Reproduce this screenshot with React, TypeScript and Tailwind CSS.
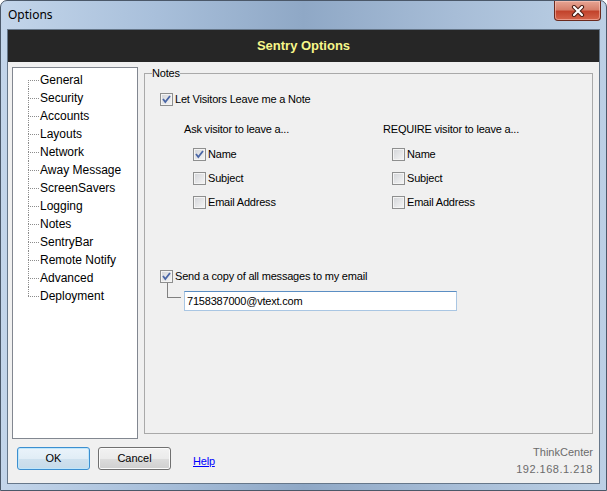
import React from 'react';

const treeItems = [
  'General',
  'Security',
  'Accounts',
  'Layouts',
  'Network',
  'Away Message',
  'ScreenSavers',
  'Logging',
  'Notes',
  'SentryBar',
  'Remote Notify',
  'Advanced',
  'Deployment',
];

const Check: React.FC<{ checked?: boolean }> = ({ checked }) => (
  <span className="flex h-[13px] w-[13px] shrink-0 items-center justify-center border border-[#8e8f8f] bg-[linear-gradient(135deg,#d2d4d8,#f6f6f6)] shadow-[inset_0_0_0_1px_#f4f4f4]">
    {checked && (
      <svg width="11" height="11" viewBox="0 0 11 11">
        <path d="M2 5 L4.3 8 L9 2" fill="none" stroke="#4a66a6" strokeWidth="1.8" />
      </svg>
    )}
  </span>
);

const CheckRow: React.FC<{ checked?: boolean; label: string; className?: string }> = ({
  checked,
  label,
  className = '',
}) => (
  <div className={`flex h-[13px] items-center gap-[2px] ${className}`}>
    <Check checked={checked} />
    <span className="whitespace-nowrap leading-[13px]">{label}</span>
  </div>
);

const App: React.FC = () => {
  return (
    <div className="flex h-[491px] w-[607px] flex-col overflow-hidden rounded-t-[7px] border border-[#4b5869] bg-[linear-gradient(90deg,#c3d5ea_0%,#a9c0db_25%,#8fa8c6_50%,#a7bdd7_75%,#bcd0e5_100%)] font-['Liberation_Sans',Arial,sans-serif] text-[11px] tracking-[-0.2px] text-black">
      {/* title bar */}
      <div className="flex h-[28px] shrink-0 items-start justify-between">
        <span className="ml-[7px] mt-[6px] font-['Noto_Sans',sans-serif] text-[12px] leading-[16px] tracking-normal text-black">
          Options
        </span>
        <div className="mr-[5px] flex h-[20px] w-[47px] items-center justify-center rounded-b-[4px] border border-t-0 border-[#6b2a1e] bg-[linear-gradient(#e6a594,#d6806c_45%,#c2432c_55%,#d5654c)] shadow-[inset_0_0_0_1px_rgba(255,210,200,0.5)]">
          <svg width="14" height="12" viewBox="0 0 14 12">
            <path d="M3 2 L11 10 M11 2 L3 10" stroke="#4a1d14" strokeWidth="4.2" strokeLinecap="round" />
            <path d="M3 2 L11 10 M11 2 L3 10" stroke="#ffffff" strokeWidth="2.2" strokeLinecap="round" />
          </svg>
        </div>
      </div>

      {/* client area */}
      <div className="mx-[6px] mb-[6px] flex flex-1 flex-col border border-[#66778a] bg-[#f0f0f0]">
        <div className="flex h-[32px] shrink-0 items-center justify-center bg-[#262626] text-[13px] font-bold tracking-normal text-[#f7f78a]">
          Sentry Options
        </div>

        <div className="flex gap-[6px] pl-[4px] pr-[6px] pt-[5px]">
          {/* tree */}
          <div className="h-[372px] w-[126px] shrink-0 border border-[#828790] bg-white pt-[3px] text-[12px] tracking-normal">
            {treeItems.map((item, i) => {
              const first = i === 0;
              const last = i === treeItems.length - 1;
              return (
                <div key={item} className="flex h-[18px] items-stretch">
                  <div className="ml-[15px] flex w-[11px] flex-col">
                    <div className={`h-[9px] ${first ? '' : 'border-l border-dotted border-[#8c8c8c]'}`} />
                    <div
                      className={`h-[9px] border-t border-dotted border-[#8c8c8c] ${last ? '' : 'border-l'}`}
                    />
                  </div>
                  <span className="ml-[1px] whitespace-nowrap leading-[18px]">{item}</span>
                </div>
              );
            })}
          </div>

          {/* notes group */}
          <fieldset className="h-[367px] w-[449px] min-w-0 border border-[#a9a9a9]">
            <legend className="ml-[7px] leading-[13px]">Notes</legend>
            <div className="pl-[15px]">
              <CheckRow checked label="Let Visitors Leave me a Note" className="mt-[13px]" />

              <div className="mt-[17px] flex">
                <div className="ml-[24px] w-[199px]">
                  <div className="leading-[13px]">Ask visitor to leave a...</div>
                  <div className="ml-[9px]">
                    <CheckRow checked label="Name" className="mt-[12px]" />
                    <CheckRow label="Subject" className="mt-[11px]" />
                    <CheckRow label="Email Address" className="mt-[11px]" />
                  </div>
                </div>
                <div>
                  <div className="leading-[13px]">REQUIRE visitor to leave a...</div>
                  <div className="ml-[9px]">
                    <CheckRow label="Name" className="mt-[12px]" />
                    <CheckRow label="Subject" className="mt-[11px]" />
                    <CheckRow label="Email Address" className="mt-[11px]" />
                  </div>
                </div>
              </div>

              <CheckRow checked label="Send a copy of all messages to my email" className="mt-[61px]" />
              <div className="flex items-start">
                <div className="ml-[7px] h-[15px] w-[14px] border-b border-l border-[#808080]" />
                <input
                  readOnly
                  defaultValue="7158387000@vtext.com"
                  className="ml-[3px] mt-[8px] h-[20px] w-[273px] border border-[#a9c6e3] border-t-[#5b8ec3] bg-white pl-[2px] text-[11px] tracking-[-0.2px] text-black outline-none"
                />
              </div>
            </div>
          </fieldset>
        </div>

        {/* footer */}
        <div className="flex h-[44px] shrink-0 pl-[9px] pr-[6px]">
          <button className="mt-[8px] h-[23px] w-[73px] rounded-[3px] border border-[#3c8fd0] bg-[linear-gradient(#eaf3fa_0%,#e1edf6_50%,#cfe1ee_51%,#c6dbea_100%)] text-[11px] tracking-normal shadow-[inset_0_0_0_1px_#bfe6fb]">
            OK
          </button>
          <button className="ml-[8px] mt-[8px] h-[23px] w-[73px] rounded-[3px] border border-[#707070] bg-[linear-gradient(#f2f2f2_0%,#ebebeb_50%,#dddddd_51%,#cfcfcf_100%)] text-[11px] tracking-normal shadow-[inset_0_0_0_1px_#fbfbfb]">
            Cancel
          </button>
          <a className="ml-[22px] mt-[16px] h-[13px] leading-[13px] text-[#0000ff] underline">Help</a>
          <div className="ml-auto mt-[5px] text-right leading-[17px] tracking-normal text-[#6b6b6b]">
            <div>ThinkCenter</div>
            <div className="tracking-[0.5px]">192.168.1.218</div>
          </div>
        </div>
      </div>
    </div>
  );
};

export default App;
